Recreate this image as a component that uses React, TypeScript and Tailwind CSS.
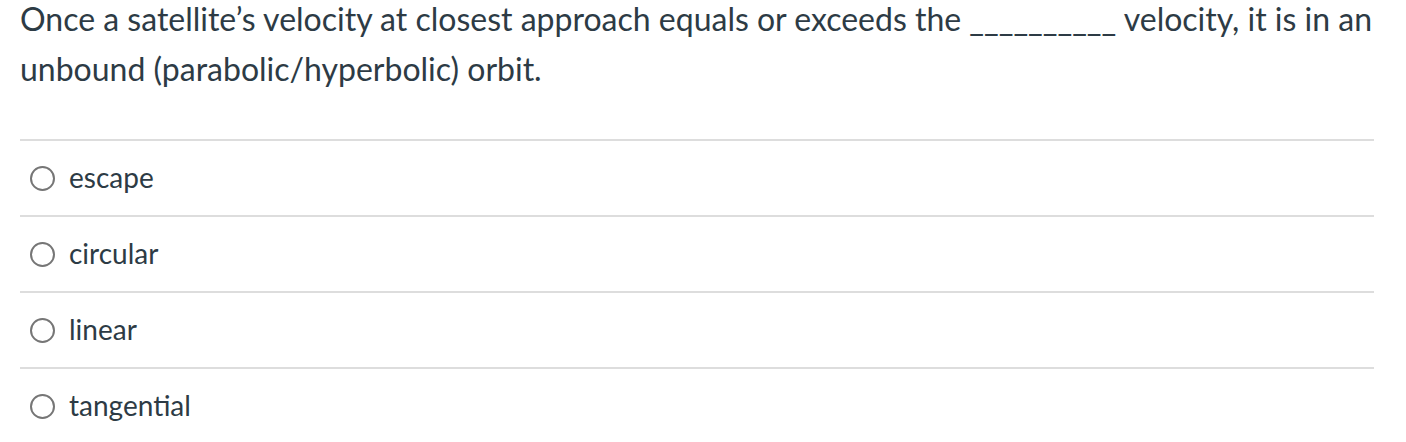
import React from 'react';

const options = ['escape', 'circular', 'linear', 'tangential'];

const Radio = () => (
  <span className="inline-block w-[25px] h-[25px] rounded-full border-2 border-[#767676] bg-white shrink-0" />
);

export default function App() {
  return (
    <div className="bg-white w-[1406px] h-[442px] overflow-hidden text-[#2d3b45]" style={{ fontFamily: 'Lato, "Open Sans", sans-serif' }}>
      <div className="px-[20px]">
        <p className="text-[32px] leading-[50px] -mt-[6px]">
          Once a satellite’s velocity at closest approach equals or exceeds the __________ velocity, it is in an unbound (parabolic/hyperbolic) orbit.
        </p>
        <div className="mt-[45px] w-[1354px]">
          {options.map((o) => (
            <div key={o} className="border-t-2 border-[#dddddd] h-[76px] flex items-center gap-[14px] pl-[10px]">
              <Radio />
              <span className="text-[28px] -mt-[2px]">{o}</span>
            </div>
          ))}
        </div>
      </div>
    </div>
  );
}
